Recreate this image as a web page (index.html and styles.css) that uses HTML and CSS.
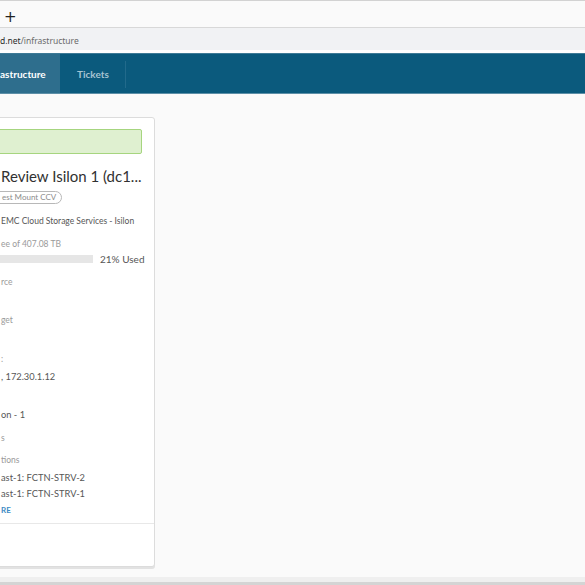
FILE: index.html
```html
<!DOCTYPE html>
<html>
<head>
<meta charset="utf-8">
<link rel="stylesheet" href="styles.css">
</head>
<body>
<div class="browser">
  <div class="tabstrip"><span class="newtab">+</span></div>
  <div class="addressbar"><span class="host">d.net</span><span class="path">/infrastructure</span></div>
</div>
<div class="gap-white"></div>
<nav class="nav">
  <div class="nav-item active">astructure</div>
  <div class="nav-item">Tickets</div>
  <div class="nav-sep"></div>
</nav>
<main class="content">
  <section class="card">
    <div class="card-body">
      <div class="alert"></div>
      <h2 class="title">Review Isilon 1 (dc1...</h2>
      <div class="pill">est Mount CCV</div>
      <div class="subtitle">EMC Cloud Storage Services - Isilon</div>
      <div class="label cap-label">ee of 407.08 TB</div>
      <div class="usage">
        <div class="bar"><div class="bar-fill" style="width:21%"></div></div>
        <span class="used">21% Used</span>
      </div>
      <div class="field"><div class="label">rce</div><div class="value">&nbsp;</div></div>
      <div class="field"><div class="label">get</div><div class="value">&nbsp;</div></div>
      <div class="field field-ip"><div class="label">:</div><div class="value">, 172.30.1.12</div></div>
      <div class="field field-loc"><div class="label">&nbsp;</div><div class="value">on - 1</div></div>
      <div class="field short"><div class="label">s</div></div>
      <div class="field last"><div class="label">tions</div>
        <div class="value">ast-1: FCTN-STRV-2</div>
        <div class="value">ast-1: FCTN-STRV-1</div>
        <div class="more">RE</div>
      </div>
    </div>
    <div class="card-footer"></div>
  </section>
</main>
<div class="bottom">
  <div class="bottom-light"></div>
  <div class="bottom-dark"></div>
</div>
</body>
</html>
```

FILE: styles.css
```css
* { box-sizing: border-box; }
html, body { margin: 0; padding: 0; }
body {
  width: 585px;
  height: 585px;
  overflow: hidden;
  background: #fafafa;
  font-family: "Lato", "Open Sans", sans-serif;
  display: flex;
  flex-direction: column;
}
.browser { border-top: 1px solid #d2d2d2; }
.tabstrip {
  height: 27px;
  background: #fafafa;
  border-bottom: 1px solid #d8d8d8;
  display: flex;
  align-items: center;
  padding-left: 4px;
}
.newtab {
  font-family: "DejaVu Sans", sans-serif;
  font-size: 15px;
  color: #222;
  line-height: 1;
  margin-top: 6px;
}
.addressbar {
  height: 22px;
  background: #f1f2f4;
  display: flex;
  align-items: center;
  font-family: "Noto Sans", "Open Sans", sans-serif;
  font-size: 8.5px;
  padding-top: 3px;
}
.host { color: #2a2a2a; }
.path { color: #6a6a6a; }
.gap-white { height: 3px; background: #ffffff; }
.nav {
  height: 41px;
  background: #0b5a7d;
  border-top: 1px solid #3f7b97;
  border-bottom: 1px solid #5d8fa7;
  display: flex;
  align-items: stretch;
}
.nav-item {
  display: flex;
  align-items: center;
  font-size: 10px;
  font-weight: 700;
  color: #a6c3d2;
  padding: 0 16px 0 17px;
}
.nav-item.active {
  background: #2e6e8d;
  color: #ffffff;
  width: 60px;
  padding: 0;
}
.nav-sep {
  width: 1px;
  background: #226a8b;
  margin: 7px 0 5px 0;
}
.content {
  flex: 1;
  padding-top: 23px;
}
.card {
  width: 176px;
  margin-left: -21px;
  background: #ffffff;
  border: 1px solid #dcdcdc;
  border-radius: 3px;
  box-shadow: 0 2px 0 #e2e2e2;
  height: 450px;
  display: flex;
  flex-direction: column;
}
.card-body {
  padding: 11px 12px 0 21px;
  flex: 1;
  border-bottom: 1px solid #e8e8e8;
  display: flex;
  flex-direction: column;
  color: #565656;
}
.alert {
  margin-left: -12px;
  height: 25px;
  background: #dff0d0;
  border: 1px solid #a6d57f;
  border-radius: 2px;
}
.title {
  margin: 12px 0 0 0;
  font-size: 15px;
  font-weight: 400;
  line-height: 20px;
  color: #313131;
  white-space: nowrap;
}
.pill {
  margin-top: 5px;
  margin-left: -12px;
  padding-left: 12px;
  width: 73px;
  height: 13px;
  border: 1px solid #b8b8b8;
  border-radius: 7px;
  font-size: 8px;
  line-height: 11px;
  color: #8c8c8c;
}
.subtitle {
  margin-top: 11px;
  font-size: 8.5px;
  line-height: 12px;
  color: #565656;
  white-space: nowrap;
}
.label {
  font-size: 8.5px;
  line-height: 12px;
  color: #9a9a9a;
  white-space: nowrap;
}
.cap-label { margin-top: 11px; }
.usage {
  margin-top: 1px;
  display: flex;
  align-items: center;
  height: 16px;
}
.bar {
  margin-left: -21px;
  padding-left: 21px;
  width: 113px;
  height: 8px;
  background: #e6e6e6;
  flex: none;
}
.bar-fill { height: 100%; background: #e6e6e6; }
.used {
  margin-left: 7px;
  font-size: 10px;
  color: #565656;
  white-space: nowrap;
}
.field { margin-top: 9px; display: flex; flex-direction: column; }
.field + .field { margin-top: 8px; }
.field.field-ip { margin-top: 9px; }
.field.field-ip .value { margin-top: 6px; }
.field.field-loc { margin-top: 8px; }
.field.short { margin-top: 11px; }
.field.short + .field { margin-top: 10px; }
.value {
  margin-top: 6px;
  font-size: 9.3px;
  line-height: 12px;
  color: #565656;
  white-space: nowrap;
}
.field.last .value:first-of-type { margin-top: 2px; }
.field .value + .value { margin-top: 4px; }
.more {
  margin-top: 4px;
  font-size: 8px;
  font-weight: 700;
  color: #3d8bc4;
  line-height: 12px;
}
.card-footer { height: 42px; }
.bottom { height: 8px; display: flex; flex-direction: column; }
.bottom-light { height: 5px; background: #efefef; }
.bottom-dark { height: 3px; background: #d4d4d4; }
```
